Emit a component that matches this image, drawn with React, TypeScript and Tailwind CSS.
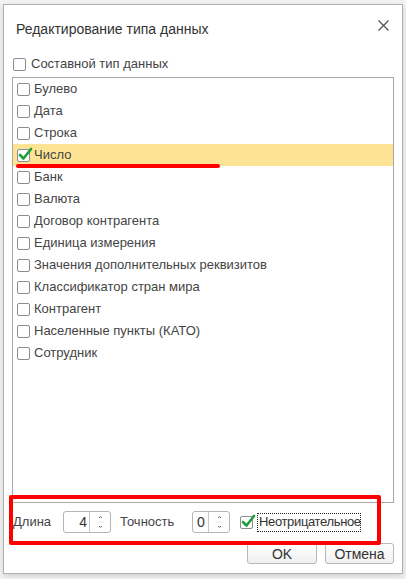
import React from 'react';

const types = [
  'Булево',
  'Дата',
  'Строка',
  'Число',
  'Банк',
  'Валюта',
  'Договор контрагента',
  'Единица измерения',
  'Значения дополнительных реквизитов',
  'Классификатор стран мира',
  'Контрагент',
  'Населенные пункты (КАТО)',
  'Сотрудник',
];

const CheckBox = ({ checked }: { checked?: boolean }) => (
  <div className="relative w-[13px] h-[13px] shrink-0 border border-[#8c8c8c] rounded-[2px] bg-white">
    {checked && (
      <svg className="absolute left-[0px] top-[-3px]" width="15" height="15" viewBox="0 0 15 15">
        <path d="M2 8 L5.5 11.5 L13 2" fill="none" stroke="#1f9e3a" strokeWidth="2.6" strokeLinecap="round" strokeLinejoin="round" />
      </svg>
    )}
  </div>
);

const Spin = ({ value, valueWidth, right }: { value: string; valueWidth: string; right?: boolean }) => (
  <div className="flex h-[22px] border border-[#b5b5b5] rounded-[3px] bg-white shrink-0">
    <div className={`${valueWidth} flex items-center ${right ? 'justify-end pr-[2px]' : 'pl-[4px]'} text-[14px] text-[#333]`}>
      {value}
    </div>
    <div className="w-[21px] border-l border-[#c8c8c8] flex flex-col items-center justify-center">
      <svg width="21" height="20" viewBox="0 0 21 20">
        <path d="M9 6 L10.5 4.5 L12 6" fill="none" stroke="#666" strokeWidth="1" />
        <line x1="7" y1="10" x2="14" y2="10" stroke="#e4e4e4" strokeWidth="1" />
        <path d="M9 14 L10.5 15.5 L12 14" fill="none" stroke="#666" strokeWidth="1" />
      </svg>
    </div>
  </div>
);

const App = () => {
  return (
    <div className="relative w-[406px] h-[579px] overflow-hidden bg-[#f3f3f3] pt-[4px] pl-[3px] font-['Liberation_Sans',Arial,sans-serif] text-[13px] text-[#444]">
      <div className="w-[400px] h-[570px] border border-[#b0b0b0] bg-white flex flex-col shadow-[0_2px_6px_rgba(0,0,0,0.15)]">
        {/* заголовок */}
        <div className="flex items-start pt-[15px] pl-[12px]">
          <div className="text-[14px] leading-[18px] text-[#333]">Редактирование типа данных</div>
          <svg className="ml-auto mr-[13px]" width="11" height="11" viewBox="0 0 11 11">
            <path d="M0.5 0.5 L10.5 10.5 M10.5 0.5 L0.5 10.5" stroke="#555" strokeWidth="1.3" />
          </svg>
        </div>

        <div className="mt-[17px] h-[18px] pl-[9px] flex items-center gap-[5px]">
          <CheckBox />
          <span>Составной тип данных</span>
        </div>

        <div className="mt-[4px] mx-[8px] h-[426px] border border-[#a8a8a8] bg-white">
          {types.map((t) => (
            <div
              key={t}
              className={`h-[22px] pl-[4px] flex items-center gap-[4px] ${t === 'Число' ? 'bg-[#fce494]' : ''}`}
            >
              <CheckBox checked={t === 'Число'} />
              <span>{t}</span>
            </div>
          ))}
        </div>

        <div className="mt-[8px] h-[22px] pl-[9px] flex items-center">
          <span className="w-[50px]">Длина</span>
          <Spin value="4" valueWidth="w-[25px]" right />
          <span className="ml-[9px] w-[72px]">Точность</span>
          <Spin value="0" valueWidth="w-[15px]" />
          <div className="ml-[10px]">
            <CheckBox checked />
          </div>
          <div className="ml-[4px] h-[19px] w-[104px] border border-dotted border-[#222] flex items-center pl-[1px] text-[#333] tracking-[-0.35px] whitespace-nowrap">
            Неотрицательное
          </div>
        </div>

        <div className="mt-[10px] flex justify-end gap-[8px] pr-[8px]">
          <button className="w-[70px] h-[21px] border border-[#b8b8b8] rounded-[3px] bg-gradient-to-b from-white to-[#f0f0f0] text-[#333] text-[14px]">
            OK
          </button>
          <button className="w-[69px] h-[21px] border border-[#b8b8b8] rounded-[3px] bg-gradient-to-b from-white to-[#f0f0f0] text-[#333] text-[14px]">
            Отмена
          </button>
        </div>
      </div>

      {/* пометки красным */}
      <div className="absolute left-[16px] top-[164px] w-[204px] h-[4px] rounded-full bg-[#ff0000]" />
      <div className="absolute left-[9px] top-[495px] w-[372px] h-[50px] border-[4px] border-[#ff0000] rounded-[2px]" />
    </div>
  );
};

export default App;
